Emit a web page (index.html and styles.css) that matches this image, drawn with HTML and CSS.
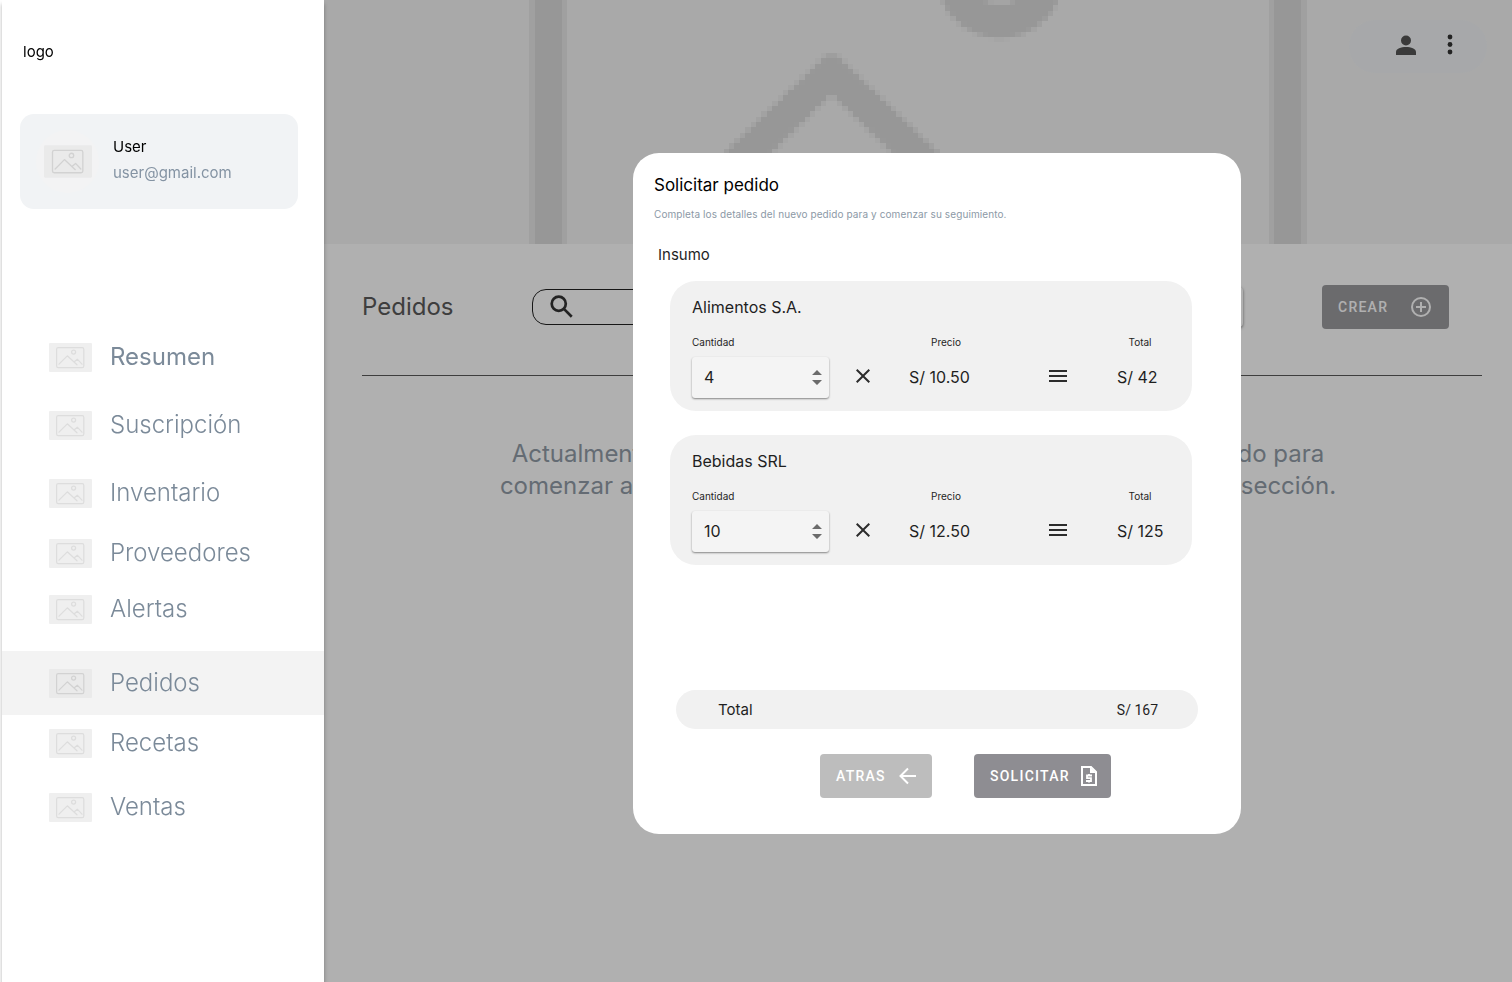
FILE: index.html
```html
<!DOCTYPE html>
<html lang="es">
<head>
<meta charset="utf-8">
<meta name="viewport" content="width=device-width, initial-scale=1">
<title>Pedidos</title>
<link rel="stylesheet" href="styles.css">
</head>
<body>
<svg class="defs" aria-hidden="true">
  <symbol id="picture" viewBox="0 0 43 29">
    <rect class="pic-bg" width="43" height="29" rx="1"/>
    <g class="pic-lines">
      <rect x="7.600" y="4.600" width="27.200" height="20" rx="1.600"/>
      <circle cx="24.600" cy="9.100" r="2"/>
      <path d="M10 21.200 18.300 12.800 28 21.800M25.300 18.800 28.300 16.200 33 21.200"/>
    </g>
  </symbol>
  <symbol id="times" viewBox="0 0 24 24"><path d="M19 6.410 17.590 5 12 10.590 6.410 5 5 6.410 10.590 12 5 17.590 6.410 19 12 13.410 17.590 19 19 17.590 13.410 12z"/></symbol>
  <symbol id="equals" viewBox="0 0 24 24"><path d="M3 6h18v2H3zM3 11h18v2H3zM3 16h18v2H3z"/></symbol>
  <symbol id="spin" viewBox="0 0 10 16"><path d="M5 0 10 5H0zM0 10h10l-5 5z"/></symbol>
</svg>

<div class="app">
  <aside class="sidebar">
    <div class="logo">logo</div>
    <section class="user">
      <div class="avatar"><svg class="avatar-pic"><use href="#picture"/></svg></div>
      <div class="user-text">
        <div class="user-name">User</div>
        <div class="user-mail">user@gmail.com</div>
      </div>
    </section>
    <nav class="nav">
      <a class="nav-item strong" href="#"><svg class="pic"><use href="#picture"/></svg>Resumen</a>
      <a class="nav-item gap-l" href="#"><svg class="pic"><use href="#picture"/></svg>Suscripción</a>
      <a class="nav-item gap-l" href="#"><svg class="pic"><use href="#picture"/></svg>Inventario</a>
      <a class="nav-item gap-s" href="#"><svg class="pic"><use href="#picture"/></svg>Proveedores</a>
      <a class="nav-item" href="#"><svg class="pic"><use href="#picture"/></svg>Alertas</a>
      <a class="nav-item active gap-xl" href="#" aria-current="page"><svg class="pic"><use href="#picture"/></svg>Pedidos</a>
      <a class="nav-item" href="#"><svg class="pic"><use href="#picture"/></svg>Recetas</a>
      <a class="nav-item gap-m" href="#"><svg class="pic"><use href="#picture"/></svg>Ventas</a>
    </nav>
  </aside>

  <main class="main">
    <header class="hero">
      <canvas class="hero-art" id="art" width="220" height="46"></canvas>
      <div class="hero-actions">
        <button class="icon-btn" type="button" aria-label="Cuenta"><svg viewBox="0 0 24 24"><path fill="#555" d="M12 12.500a5 5 0 1 0 0-10 5 5 0 0 0 0 10zM2 19v3h20V19c0-3.300-5-5-10-5S2 15.700 2 19z"/></svg></button>
        <button class="icon-btn" type="button" aria-label="Más opciones"><svg viewBox="0 0 24 24"><circle cx="12" cy="4" r="2.400"/><circle cx="12" cy="11.500" r="2.400"/><circle cx="12" cy="19" r="2.400"/></svg></button>
      </div>
    </header>

    <div class="toolbar">
      <h1 class="page-title">Pedidos</h1>
      <label class="search">
        <svg viewBox="0 0 24 24" aria-hidden="true"><circle cx="9" cy="9" r="6.500"/><path d="m14 14 7 7"/></svg>
        <input type="search" aria-label="Buscar">
      </label>
      <select class="filter" aria-label="Filtro"><option></option></select>
      <button class="btn create" type="button">CREAR
        <svg viewBox="0 0 24 24" aria-hidden="true"><circle cx="12" cy="12" r="9"/><path d="M12 7v10M7 12h10"/></svg>
      </button>
    </div>

    <p class="empty">Actualmente no cuentas con ningún pedido. Crea tu primer pedido para<br>comenzar a visualizar todos los detalles y el seguimiento en esta sección.</p>

    <div class="overlay">
      <form class="dialog" role="dialog" aria-labelledby="dlg-title">
        <h2 class="dialog-title" id="dlg-title">Solicitar pedido</h2>
        <p class="dialog-sub">Completa los detalles del nuevo pedido para y comenzar su seguimiento.</p>
        <h3 class="dialog-section">Insumo</h3>

        <div class="cards">
          <section class="card">
            <h4 class="card-title">Alimentos S.A.</h4>
            <div class="row">
              <div class="cell">
                <label class="label" for="q1">Cantidad</label>
                <div class="qty"><input id="q1" type="number" value="4"><svg><use href="#spin"/></svg></div>
              </div>
              <svg class="op"><use href="#times"/></svg>
              <div class="cell price"><span class="label">Precio</span><span class="value">S/ 10.50</span></div>
              <svg class="op"><use href="#equals"/></svg>
              <div class="cell total"><span class="label">Total</span><span class="value">S/ 42</span></div>
            </div>
          </section>
          <section class="card">
            <h4 class="card-title">Bebidas SRL</h4>
            <div class="row">
              <div class="cell">
                <label class="label" for="q2">Cantidad</label>
                <div class="qty"><input id="q2" type="number" value="10"><svg><use href="#spin"/></svg></div>
              </div>
              <svg class="op"><use href="#times"/></svg>
              <div class="cell price"><span class="label">Precio</span><span class="value">S/ 12.50</span></div>
              <svg class="op"><use href="#equals"/></svg>
              <div class="cell total"><span class="label">Total</span><span class="value">S/ 125</span></div>
            </div>
          </section>
        </div>

        <div class="sum"><span class="sum-label">Total</span><span class="sum-value">S/ 167</span></div>

        <div class="actions">
          <button class="btn back" type="button">ATRAS
            <svg viewBox="0 0 24 24" aria-hidden="true"><path d="M20 12H5M12 4.500 4.500 12l7.500 7.500"/></svg>
          </button>
          <button class="btn submit" type="button">SOLICITAR
            <svg viewBox="0 0 24 24" aria-hidden="true"><path d="M5 3h9l5 5v13H5z"/><path class="fill" d="M13 3v6h6z"/><path class="thin" d="M15 11.500h-5v2.700h4v2.800H9M12 10v1.500M12 17v1.500"/></svg>
          </button>
        </div>
      </form>
    </div>
  </main>
</div>
<script src="art.js"></script>
</body>
</html>
```
FILE: styles.css
```css
* { box-sizing: border-box; }
html, body { height: 100%; }
body { margin: 0; font-family: Inter, "Open Sans", sans-serif; color: #1f1f1f; background: #fff; }
h1, h2, h3, h4, p { margin: 0; font-weight: 400; }
button, input, select { font: inherit; color: inherit; border: 0; margin: 0; }
a { color: inherit; text-decoration: none; }
.defs { position: absolute; width: 0; height: 0; }

.app { display: flex; min-height: 100%; }

/* Sidebar */
.sidebar { position: relative; z-index: 2; flex: 0 0 322px; margin-left: 2px; background: #fff; box-shadow: 0 4px 4px rgba(0, 0, 0, .3); }
.logo { padding: 40px 0 0 21px; font-size: 15px; line-height: 24px; color: #000; }
.user { display: flex; align-items: center; gap: 14px; height: 95px; margin: 50px 26px 0 18px; padding-left: 16px; border-radius: 14px; background: #f1f3f5; }
.avatar { display: flex; align-items: center; justify-content: center; width: 63px; height: 63px; border-radius: 50%; background: #f3f3f4; }
.avatar-pic { width: 48px; height: 33px; }
.user-text { padding-bottom: 4px; font-size: 15px; line-height: 26px; }
.user-name { color: #000; }
.user-mail { color: #8493a3; }
.pic-bg { fill: #eaeaea; }
.pic-lines { fill: none; stroke: #d2d2d2; stroke-width: 1.2; stroke-linecap: round; stroke-linejoin: round; }
.nav { display: flex; flex-direction: column; margin-top: 120px; }
.nav-item { display: flex; align-items: center; gap: 18px; height: 56px; padding-left: 47px; font-size: 24px; font-weight: 300; line-height: 32px; color: #7b8a99; }
.nav-item.strong { font-weight: 400; }
.nav-item.active { height: 64px; background: #f3f3f3; }
.gap-s { margin-top: 4px; }
.gap-m { margin-top: 8px; }
.gap-l { margin-top: 12px; }
.gap-xl { margin-top: 14px; }
.pic { flex: none; width: 43px; height: 29px; }
.nav-item:not(.active) .pic { opacity: .75; }

/* Main area */
.main { position: relative; flex: 1; min-width: 0; }
.hero { position: relative; height: 244px; background: #f5f5f5; }
.hero-art { display: block; width: 100%; height: 100%; image-rendering: pixelated; }
.hero-actions { position: absolute; top: 20px; right: 25px; display: flex; align-items: center; justify-content: flex-end; gap: 20px; width: 138px; height: 53px; padding: 0 25px 4px 0; border-radius: 26px; background: #f2f4f6; }
.icon-btn { width: 24px; height: 24px; padding: 0; background: none; }
.icon-btn svg { display: block; width: 24px; height: 24px; fill: #333; }

.toolbar { display: flex; align-items: center; margin: 0 30px 0 38px; height: 132px; padding: 0 33px 5px 0; border-bottom: 1px solid #5b5b5b; }
.page-title { width: 170px; font-size: 24px; line-height: 32px; color: #5a5a5a; }
.search { display: flex; align-items: center; flex: 1; height: 36px; padding-left: 16px; border: 1px solid #222; border-radius: 14px; }
.search svg { flex: none; width: 26px; height: 26px; fill: none; stroke: #333; stroke-width: 2.5; }
.search input { flex: 1; min-width: 0; background: none; outline: 0; }
.filter { width: 200px; height: 40px; margin: 0 79px 0 60px; border-radius: 4px; background: #fff; box-shadow: 0 1px 3px rgba(0, 0, 0, .5); appearance: none; }
.btn { display: flex; align-items: center; justify-content: space-between; height: 44px; padding: 0 16px; border-radius: 4px; font-family: Roboto, sans-serif; font-size: 14px; font-weight: 500; letter-spacing: 1.25px; color: #fff; }
.btn svg { flex: none; width: 24px; height: 24px; fill: none; stroke: #fff; stroke-width: 2; }
.create { width: 127px; background: #9c9c9f; }

.empty { margin-top: 62px; text-align: center; font-size: 24px; line-height: 32px; color: #919ca7; }

/* Dialog */
.overlay { position: absolute; inset: 0; display: flex; justify-content: center; align-items: flex-start; padding: 153px 0 0 38px; background: rgba(0, 0, 0, .31); }
.dialog { width: 608px; padding: 20px 43px 36px 37px; border-radius: 26px; background: #fff; }
.dialog-title, .dialog-sub { margin-left: -16px; }
.dialog-title { font-size: 17px; line-height: 24px; color: #000; }
.dialog-sub { margin-top: 9px; font-size: 10px; line-height: 16px; letter-spacing: .1px; color: #8c99a6; }
.dialog-section { margin: 21px 0 14px -12px; font-size: 15px; line-height: 24px; }
.cards { display: grid; gap: 24px; margin-right: 6px; }
.card { padding: 14px 22px 13px; border-radius: 26px; background: #f1f1f1; }
.card-title { font-size: 16px; line-height: 24px; }
.row { display: grid; grid-template-columns: 137px 68px 102px 1fr 53px; margin-top: 16px; }
.cell { display: flex; flex-direction: column; gap: 8px; }
.label { font-size: 10px; line-height: 14px; }
.price { width: 74px; margin-left: 12px; }
.total { width: 46px; }
.price .label, .total .label { text-align: center; }
.value { font-size: 16px; line-height: 41px; white-space: nowrap; }
.op { align-self: end; justify-self: center; width: 24px; height: 24px; margin-bottom: 10px; fill: #2c2c2c; }
.qty { position: relative; height: 41px; border-radius: 3px; background: #f4f4f4; box-shadow: 0 1px 2px rgba(0, 0, 0, .45); }
.qty input { display: block; width: 100%; height: 100%; padding: 0 12px 2px; background: none; font-size: 16px; appearance: textfield; outline: 0; }
.qty input::-webkit-inner-spin-button { appearance: none; }
.qty svg { position: absolute; right: 7px; top: 13px; width: 10px; height: 16px; fill: #6b6b6b; pointer-events: none; }
.sum { display: flex; align-items: center; justify-content: space-between; height: 39px; margin: 125px 0 0 6px; padding: 0 40px 0 42px; border-radius: 20px; background: #f1f1f1; }
.sum-label { font-size: 15px; }
.sum-value { font-family: Roboto, sans-serif; font-size: 14px; }
.actions { display: flex; justify-content: center; gap: 42px; margin: 25px -29px 0 34px; }
.back { width: 112px; padding-right: 12px; background: #bdbdbd; }
.submit { width: 137px; padding-right: 10px; background: #8e8d92; }
.submit .fill { fill: #fff; stroke: none; }
.submit .thin { stroke-width: 1.8; }
```
FILE: art.js
```js
// Draws the oversized picture placeholder on a coarse grid.
const ctx = document.getElementById("art").getContext("2d");
const line = "#dbdbdb";
ctx.fillStyle = line;
ctx.fillRect(38.5, 0, 6, 46);
ctx.fillRect(175.5, 0, 6, 46);

ctx.strokeStyle = line;
ctx.lineWidth = 6.1;
ctx.lineJoin = "round";
ctx.beginPath();
ctx.moveTo(60, 47);
ctx.lineTo(94, 13.6);
ctx.lineTo(128, 47);
ctx.stroke();

ctx.lineWidth = 6.3;
ctx.beginPath();
ctx.arc(125.2, -4.6, 8.6, 0, Math.PI * 2);
ctx.stroke();
```
